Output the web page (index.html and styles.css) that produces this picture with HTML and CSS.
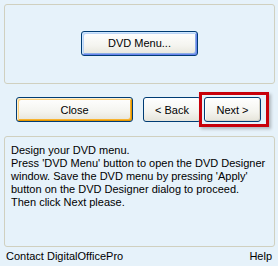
FILE: index.html
```html
<!DOCTYPE html>
<html>
<head>
<meta charset="utf-8">
<link rel="stylesheet" href="styles.css">
</head>
<body>
<div class="page">
  <div class="group">
    <button class="btn btn-default">DVD Menu...</button>
  </div>
  <div class="actions">
    <button class="btn btn-hot close">Close</button>
    <div class="nav">
      <button class="btn back">&lt; Back</button>
      <div class="highlight">
        <button class="btn next">Next &gt;</button>
      </div>
    </div>
  </div>
  <div class="info">
    <p>Design your DVD menu.<br>Press 'DVD Menu' button to open the DVD Designer window. Save the DVD menu by pressing 'Apply' button on the DVD Designer dialog to proceed.<br>Then click Next please.</p>
  </div>
  <div class="footer">
    <span>Contact DigitalOfficePro</span>
    <span>Help</span>
  </div>
</div>
</body>
</html>
```
FILE: styles.css
```css
html, body {
  margin: 0;
  padding: 0;
  background: #e6f2fa;
}
.page {
  width: 278px;
  height: 266px;
  font-family: "Liberation Sans", Arial, sans-serif;
  font-size: 11px;
  color: #000;
  display: flex;
  flex-direction: column;
}
.group {
  margin: 4px 3px 0 4px;
  height: 80px;
  border: 1px solid #d0d0bf;
  border-radius: 3px;
  display: flex;
  align-items: center;
  justify-content: center;
  padding-bottom: 2px;
  box-sizing: border-box;
}
.btn {
  font-family: inherit;
  font-size: 11px;
  color: #000;
  height: 25px;
  border: 1px solid #003c74;
  border-radius: 3px;
  background: linear-gradient(#ffffff, #f4f4ef 60%, #e6e4da);
  padding: 0;
  box-sizing: border-box;
}
.btn-default {
  width: 117px;
  box-shadow: inset 1px 1px 0 #cee7ff, inset -1px -1px 0 #6982ee, inset 2px 2px 0 #bcd4f6, inset -2px -2px 0 #89ade4;
}
.actions {
  display: flex;
  align-items: center;
  margin-top: 8px;
  padding-left: 16px;
}
.btn-hot {
  box-shadow: inset 1px 1px 0 #fff0cf, inset -1px -1px 0 #e59700, inset 2px 2px 0 #fcd280, inset -2px -2px 0 #f8b330;
}
.close {
  width: 117px;
}
.nav {
  display: flex;
  align-items: center;
  margin-left: 10px;
}
.back {
  width: 58px;
}
.highlight {
  margin-left: -2px;
  border: 3px solid #c8000a;
  padding: 2px 5px 2px 2px;
  box-shadow: 2px 2px 3px rgba(0, 0, 0, 0.25);
}
.next {
  width: 57px;
  box-shadow: inset 1px 1px 0 #fff, inset -1px -1px 0 #d8d4c8;
}
.info {
  margin: 9px 3px 0 4px;
  height: 111px;
  box-sizing: border-box;
  border: 1px solid #d0d0bf;
  border-radius: 3px;
  padding: 7px 6px 0 6px;
}
.info p {
  margin: 0;
  line-height: 13px;
}
.footer {
  display: flex;
  justify-content: space-between;
  padding: 3px 6px 0 6px;
}
```
